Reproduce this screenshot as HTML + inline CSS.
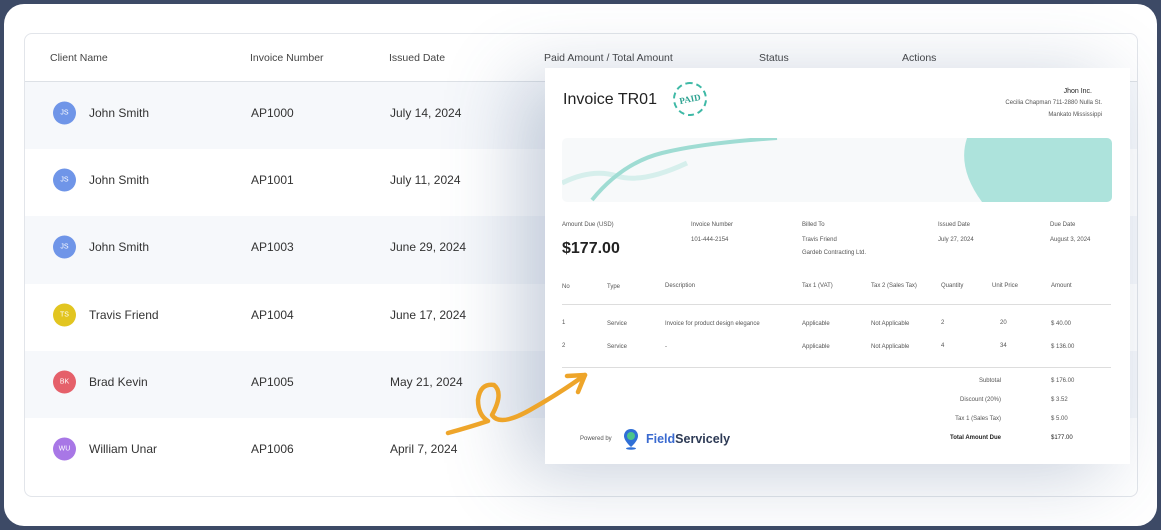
<!DOCTYPE html>
<html><head><meta charset="utf-8"><style>
*{box-sizing:border-box;margin:0;padding:0}
body{width:1161px;height:530px;background:#3d4a66;font-family:"Liberation Sans",sans-serif;position:relative;overflow:hidden}
.frame{position:absolute;left:4px;top:4px;width:1153px;height:522px;background:#fff;border-radius:20px}
.card{position:absolute;left:24px;top:33px;width:1114px;height:464px;border:1px solid #e2e5ea;border-radius:8px;overflow:hidden;background:#fff}
.th{position:absolute;top:0;height:48px;line-height:48px;font-size:10.5px;color:#444;border-bottom:1px solid #dde1e6;width:100%}
.th span{position:absolute}
.row{position:absolute;left:0;width:100%;height:67px;font-size:12px;color:#333}
.row.l{background:#f6f8fb}
.row span{position:absolute;top:46%;transform:translateY(-50%)}
.av{width:23px;height:23px;border-radius:50%;left:28px;color:#fff;font-size:7px;text-align:center;line-height:23px}
.inv{position:absolute;left:545px;top:68px;width:585px;height:396px;background:#fff;box-shadow:-25px 10px 70px rgba(70,95,140,.3);font-family:"Liberation Sans",sans-serif;color:#333}
.inv .a{position:absolute;font-size:6px;color:#555;white-space:nowrap}
</style></head><body>
<div class="frame"></div>
<div class="card">
 <div class="th"><span style="left:25px">Client Name</span><span style="left:225px">Invoice Number</span><span style="left:364px">Issued Date</span><span style="left:519px">Paid Amount / Total Amount</span><span style="left:734px">Status</span><span style="left:877px">Actions</span></div>
 <div class="row l" style="top:48px"><span class="av" style="background:#6f95e8">JS</span><span style="left:64px">John Smith</span><span style="left:226px">AP1000</span><span style="left:365px">July 14, 2024</span></div>
 <div class="row" style="top:115px"><span class="av" style="background:#6f95e8">JS</span><span style="left:64px">John Smith</span><span style="left:226px">AP1001</span><span style="left:365px">July 11, 2024</span></div>
 <div class="row l" style="top:182px;height:68px"><span class="av" style="background:#6f95e8">JS</span><span style="left:64px">John Smith</span><span style="left:226px">AP1003</span><span style="left:365px">June 29, 2024</span></div>
 <div class="row" style="top:250px"><span class="av" style="background:#e2c520">TS</span><span style="left:64px">Travis Friend</span><span style="left:226px">AP1004</span><span style="left:365px">June 17, 2024</span></div>
 <div class="row l" style="top:317px"><span class="av" style="background:#e5606a">BK</span><span style="left:64px">Brad Kevin</span><span style="left:226px">AP1005</span><span style="left:365px">May 21, 2024</span></div>
 <div class="row" style="top:384px"><span class="av" style="background:#a877e6">WU</span><span style="left:64px">William Unar</span><span style="left:226px">AP1006</span><span style="left:365px">April 7, 2024</span></div>
</div>
<div class="inv">
 <div style="position:absolute;left:18px;top:23px;font-size:16px;color:#222">Invoice TR01</div>
 <div style="position:absolute;left:128px;top:14px;width:34px;height:34px;border:2px dashed #3fb9a6;border-radius:50%;color:#2fa392;font:bold 9px 'Liberation Serif',serif;text-align:center;line-height:30px;transform:rotate(-12deg)">PAID</div>
 <div class="a" style="right:38px;top:20px;font-size:7px;color:#222">Jhon Inc.</div>
 <div class="a" style="right:28px;top:32px">Cecilia Chapman 711-2880 Nulla St.</div>
 <div class="a" style="right:28px;top:44px">Mankato Mississippi</div>
 <svg style="position:absolute;left:17px;top:70px" width="550" height="64" viewBox="0 0 550 64">
  <rect width="550" height="64" rx="5" fill="#f7f9fa"/>
  <circle cx="465" cy="0" r="42" fill="#d4efeb"/>
  <path d="M405 0H545a5 5 0 0 1 5 5V59a5 5 0 0 1-5 5H420Q395 30 405 0Z" fill="#ade3dc"/>
  <path d="M0 45Q30 30 55 38T125 25" stroke="#d6efec" stroke-width="5" fill="none"/>
  <path d="M30 62Q60 25 100 15T215 0" stroke="#9fdcd3" stroke-width="4" fill="none"/>
 </svg>
 <div class="a" style="left:17px;top:154px">Amount Due (USD)</div>
 <div style="position:absolute;left:17px;top:172px;font-size:16px;font-weight:bold;color:#222">$177.00</div>
 <div class="a" style="left:146px;top:154px">Invoice Number</div><div class="a" style="left:146px;top:169px">101-444-2154</div>
 <div class="a" style="left:257px;top:154px">Billed To</div><div class="a" style="left:257px;top:169px">Travis Friend</div><div class="a" style="left:257px;top:182px">Gardeb Contracting Ltd.</div>
 <div class="a" style="left:393px;top:154px">Issued Date</div><div class="a" style="left:393px;top:169px">July 27, 2024</div>
 <div class="a" style="left:505px;top:154px">Due Date</div><div class="a" style="left:505px;top:169px">August 3, 2024</div>
 <div class="a" style="left:17px;top:216px">No</div><div class="a" style="left:62px;top:216px">Type</div><div class="a" style="left:120px;top:215px">Description</div><div class="a" style="left:257px;top:215px">Tax 1 (VAT)</div><div class="a" style="left:326px;top:215px">Tax 2 (Sales Tax)</div><div class="a" style="left:396px;top:215px">Quantity</div><div class="a" style="left:447px;top:215px">Unit Price</div><div class="a" style="left:506px;top:215px">Amount</div>
 <div style="position:absolute;left:17px;top:236px;width:549px;border-top:1px solid #ddd"></div>
 <div class="a" style="left:17px;top:252px">1</div><div class="a" style="left:62px;top:253px">Service</div><div class="a" style="left:120px;top:253px">Invoice for product design elegance</div><div class="a" style="left:257px;top:253px">Applicable</div><div class="a" style="left:326px;top:253px">Not Applicable</div><div class="a" style="left:396px;top:252px">2</div><div class="a" style="left:455px;top:252px">20</div><div class="a" style="left:506px;top:253px">$ 40.00</div>
 <div class="a" style="left:17px;top:275px">2</div><div class="a" style="left:62px;top:276px">Service</div><div class="a" style="left:120px;top:276px">-</div><div class="a" style="left:257px;top:276px">Applicable</div><div class="a" style="left:326px;top:276px">Not Applicable</div><div class="a" style="left:396px;top:275px">4</div><div class="a" style="left:455px;top:275px">34</div><div class="a" style="left:506px;top:276px">$ 136.00</div>
 <div style="position:absolute;left:17px;top:299px;width:549px;border-top:1px solid #ddd"></div>
 <div class="a" style="right:129px;top:310px">Subtotal</div><div class="a" style="left:506px;top:310px">$ 176.00</div>
 <div class="a" style="right:129px;top:329px">Discount (20%)</div><div class="a" style="left:506px;top:329px">$ 3.52</div>
 <div class="a" style="right:129px;top:348px">Tax 1 (Sales Tax)</div><div class="a" style="left:506px;top:348px">$ 5.00</div>
 <div class="a" style="right:129px;top:367px;font-weight:bold;color:#222">Total Amount Due</div><div class="a" style="left:506px;top:367px;color:#222">$177.00</div>
 <div class="a" style="left:35px;top:368px">Powered by</div>
 <svg style="position:absolute;left:78px;top:360px" width="16" height="22" viewBox="0 0 16 22"><path d="M8 1C4 1 1 4 1 8c0 5 7 11 7 11s7-6 7-11c0-4-3-7-7-7z" fill="#2f6fd6"/><circle cx="8" cy="8" r="4" fill="#4cc48a"/><ellipse cx="8" cy="20.5" rx="5" ry="1.3" fill="#2f6fd6"/></svg>
 <div style="position:absolute;left:101px;top:364px;font-size:12.5px;font-weight:bold;color:#2d3a55"><span style="color:#3a6ad0">Field</span>Servicely</div>
</div>
<svg style="position:absolute;left:440px;top:365px" width="160" height="75" viewBox="0 0 160 75">
 <path d="M8 68Q30 62 48 56Q38 50 38 35Q40 18 54 20Q64 28 52 50Q60 62 90 45Q120 28 145 10" stroke="#eea52a" stroke-width="4.5" fill="none" stroke-linecap="round" stroke-linejoin="round"/>
 <path d="M127 11L145 10L138 27" stroke="#eea52a" stroke-width="4.5" fill="none" stroke-linecap="round" stroke-linejoin="round"/>
</svg>
</body></html>
